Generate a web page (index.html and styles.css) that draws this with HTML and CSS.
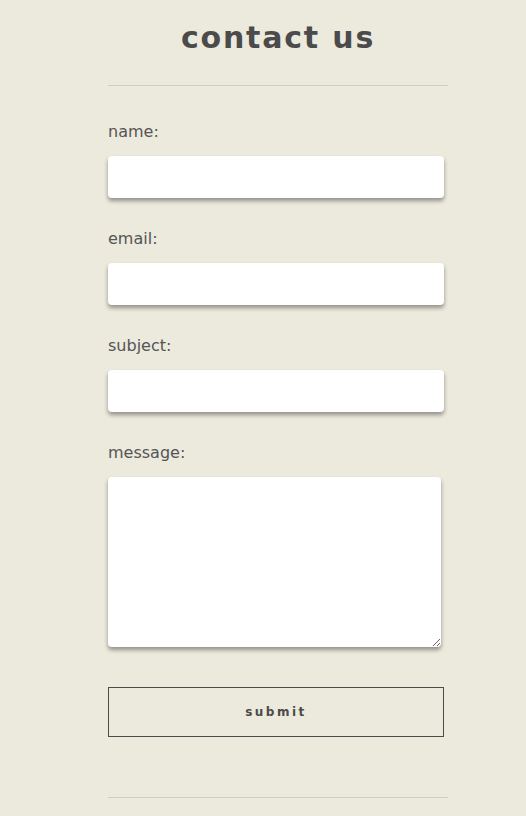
FILE: index.html
```html
<!DOCTYPE html>
<html>
<head>
<meta charset="utf-8">
<link rel="stylesheet" href="styles.css">
</head>
<body>
<main class="page">
  <h1 class="title">contact us</h1>
  <hr class="rule">
  <form class="form">
    <label class="field">
      <span class="label">name:</span>
      <input class="input" type="text">
    </label>
    <label class="field">
      <span class="label">email:</span>
      <input class="input" type="text">
    </label>
    <label class="field">
      <span class="label">subject:</span>
      <input class="input" type="text">
    </label>
    <label class="field">
      <span class="label">message:</span>
      <textarea class="textarea"></textarea>
    </label>
    <button class="submit" type="button">submit</button>
  </form>
  <hr class="rule rule-bottom">
</main>
</body>
</html>
```
FILE: styles.css
```css
html, body {
  margin: 0;
  padding: 0;
  background: #ece9dd;
}
body {
  font-family: "DejaVu Sans", "Noto Sans", sans-serif;
  color: #4b4b4b;
}
.page {
  width: 340px;
  margin-left: 108px;
  display: flex;
  flex-direction: column;
}
.title {
  margin: 16px 0 0;
  text-align: center;
  font-size: 30px;
  font-weight: 700;
  letter-spacing: 1.8px;
  line-height: 44px;
  color: #4b4b4b;
}
.rule {
  margin: 25px 0 0;
  border: 0;
  height: 1px;
  background: #cfcdc6;
  width: 340px;
}
.form {
  display: flex;
  flex-direction: column;
  margin-top: 36px;
}
.field {
  display: flex;
  flex-direction: column;
  margin-bottom: 31px;
}
.label {
  font-size: 16px;
  line-height: 20px;
  color: #555;
  margin-bottom: 14px;
  font-weight: 400;
}
.input, .textarea {
  border: 0;
  background: #fff;
  border-radius: 4px;
  box-shadow: 0 3px 4px rgba(0,0,0,0.38);
  width: 336px;
  box-sizing: border-box;
  margin: 0;
  padding: 8px;
  font: inherit;
}
.input {
  height: 42px;
}
.textarea {
  width: 333px;
  height: 170px;
  resize: vertical;
}
.submit {
  margin-top: 9px;
  width: 336px;
  height: 50px;
  border: 1px solid #4b4b4b;
  background: transparent;
  font-family: inherit;
  font-size: 12px;
  font-weight: 700;
  letter-spacing: 2.5px;
  color: #4b4b4b;
  padding: 0;
}
.rule-bottom {
  margin-top: 60px;
}
```
